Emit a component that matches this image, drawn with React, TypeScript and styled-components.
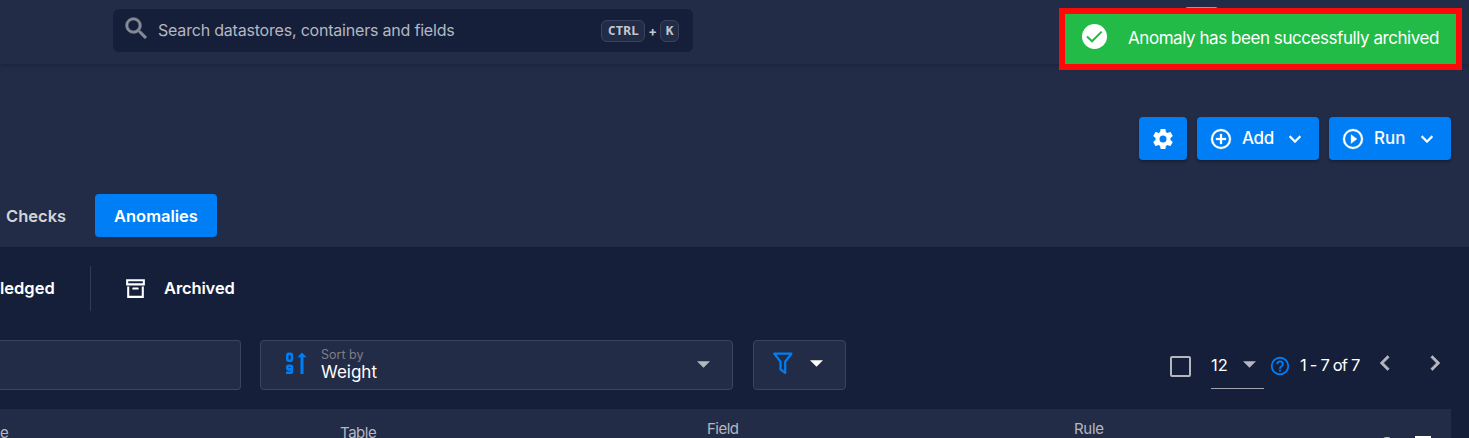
import React from "react";
import styled, { createGlobalStyle } from "styled-components";

const color = {
  panel: "#232c47",
  ground: "#161f3a",
  line: "#3c445d",
  blue: "#007ef5",
  green: "#22bb47",
  muted: "#b4b7c0",
  white: "#ffffff",
};

const GlobalStyle = createGlobalStyle`
  * { box-sizing: border-box; }
  html, body { margin: 0; background: ${color.ground}; overflow: hidden; }
  body { font-family: Inter, "Liberation Sans", sans-serif; color: ${color.white}; }
`;

const Page = styled.div`
  position: relative;
  display: flex;
  flex-direction: column;
  width: 1469px;
  height: 438px;
  overflow: hidden;
  background: ${color.ground};
`;

const Label = styled.span<{
  $size: number;
  $track?: number;
  $weight?: number;
  $color?: string;
  $line?: number;
}>`
  flex: none;
  font-size: ${(p) => p.$size}px;
  letter-spacing: ${(p) => p.$track ?? 0}px;
  font-weight: ${(p) => p.$weight ?? 400};
  color: ${(p) => p.$color ?? color.white};
  line-height: ${(p) => p.$line ?? 20}px;
  white-space: nowrap;
`;

const Glyph = styled.svg`
  display: block;
  flex: none;
  fill: currentColor;
`;

const TopBar = styled.header`
  flex: none;
  height: 64px;
  padding: 9px 0 0 113px;
  background: ${color.panel};
  box-shadow: 0 1px 5px rgba(10, 16, 32, 0.35);
  z-index: 1;
`;

const SearchBox = styled.div`
  display: flex;
  align-items: center;
  width: 580px;
  height: 43px;
  padding: 0 14px 0 9px;
  border-radius: 6px;
  background: ${color.ground};
  color: #868b98;
`;

const SearchText = styled.div`
  flex: 1;
  display: flex;
  padding: 0 0 1px 7px;
`;

const SearchIcon = styled.div`
  margin-top: -4px;
`;

const Shortcut = styled.div`
  display: flex;
  align-items: center;
  gap: 3px;
`;

const Key = styled.kbd<{ $width: number }>`
  display: flex;
  align-items: center;
  justify-content: center;
  width: ${(p) => p.$width}px;
  height: 22px;
  border: 1px solid ${color.line};
  border-radius: 6px;
  background: ${color.panel};
  color: #c3c5cc;
  font: bold 13px "DejaVu Sans Mono", monospace;
  letter-spacing: -0.1px;
`;

const Hero = styled.section`
  flex: none;
  display: flex;
  flex-direction: column;
  justify-content: space-between;
  height: 183px;
  padding: 53px 18px 10px 0;
  background: ${color.panel};
`;

const Actions = styled.div`
  display: flex;
  justify-content: flex-end;
  gap: 10px;
`;

const ActionButton = styled.button<{ $width: number }>`
  display: flex;
  align-items: center;
  width: ${(p) => p.$width}px;
  height: 43px;
  padding: 0 12px;
  border: 0;
  border-radius: 4px;
  background: ${color.blue};
  color: ${color.white};
  font-family: inherit;
  box-shadow: 0 2px 3px rgba(8, 14, 30, 0.4);
`;

const ActionText = styled.div`
  flex: 1;
  display: flex;
  padding: 0 0 1px 9px;
`;

const Tabs = styled.nav`
  display: flex;
  align-items: center;
`;

const Tab = styled.div<{ $active?: boolean; $width: number }>`
  display: flex;
  align-items: center;
  width: ${(p) => p.$width}px;
  height: 43px;
  padding-left: ${(p) => (p.$active ? 19 : 6)}px;
  border-radius: 4px;
  background: ${(p) => (p.$active ? color.blue : "transparent")};
`;

const StatusBar = styled.div`
  flex: none;
  display: flex;
  align-items: center;
  height: 93px;
  padding-bottom: 11px;
`;

const Status = styled.div<{ $first?: boolean }>`
  display: flex;
  align-items: center;
  height: 45px;
  width: ${(p) => (p.$first ? "91px" : "auto")};
  border-right: ${(p) => (p.$first ? `1px solid #323b54` : "0")};
  padding-left: ${(p) => (p.$first ? 0 : 32)}px;
  gap: 16px;
`;

const Filters = styled.div`
  flex: none;
  display: flex;
  height: 69px;
`;

const Field = styled.div<{ $width: number; $gap?: number; $open?: boolean }>`
  flex: none;
  display: flex;
  align-items: center;
  width: ${(p) => p.$width}px;
  height: 50px;
  margin-right: ${(p) => p.$gap ?? 0}px;
  border: 1px solid ${color.line};
  border-left-width: ${(p) => (p.$open ? 0 : 1)}px;
  border-radius: ${(p) => (p.$open ? "0 4px 4px 0" : "4px")};
  background: ${color.panel};
`;

const SortIcon = styled.div`
  margin: -4px 14px 0 24px;
  color: ${color.blue};
`;

const SortText = styled.div`
  flex: 1;
  display: flex;
  flex-direction: column;
  align-items: flex-start;
`;

const SortCaret = styled.div`
  margin: -2px 22px 0 0;
  color: ${color.muted};
`;

const FunnelIcon = styled.div`
  margin: -4px 17px 0 19px;
  color: ${color.blue};
`;

const FunnelCaret = styled.div`
  margin-top: -3px;
`;

const Pager = styled.div`
  display: flex;
  align-items: flex-start;
  margin-left: 324px;
`;

const CheckBox = styled.div`
  width: 21px;
  height: 21px;
  margin-top: 16px;
  border: 2px solid ${color.muted};
  border-radius: 2px;
`;

const PageSize = styled.div`
  display: flex;
  justify-content: space-between;
  width: 53px;
  height: 49px;
  margin-left: 20px;
  padding: 15px 8px 0 0;
  border-bottom: 1px solid #a1a5b0;
  color: ${color.muted};
`;

const CaretDrop = styled.div`
  padding-top: 6px;
`;

const Help = styled.div`
  margin: 15px 9px 0 5px;
  color: ${color.blue};
`;

const RangeText = styled.div`
  display: flex;
  width: 70px;
  padding-top: 15px;
`;

const Arrow = styled.div<{ $gap?: number }>`
  margin-right: ${(p) => p.$gap ?? 0}px;
  padding-top: 8px;
  color: ${color.muted};
`;

const TableHead = styled.div`
  flex: none;
  display: grid;
  grid-template-columns: 340px 367px 367px 309px 1fr;
  width: 1451px;
  height: 29px;
  overflow: hidden;
  background: ${color.panel};
`;

const HeadCell = styled.div<{ $top: number }>`
  display: flex;
  padding-top: ${(p) => p.$top}px;
`;

const HeadIcons = styled.div`
  display: flex;
  gap: 24px;
  padding-top: 27px;
`;

const CutDot = styled.div`
  width: 8px;
  height: 8px;
  margin-top: 1px;
  border-radius: 3px;
  background: ${color.muted};
`;

const CutBox = styled.div`
  width: 16px;
  height: 8px;
  background: ${color.white};
`;

const BadgeEdge = styled.div`
  position: absolute;
  top: 7px;
  left: 1185px;
  width: 33px;
  height: 6px;
  border-radius: 3px 3px 0 0;
  background: #d9952c;
  z-index: 2;
`;

const Toast = styled.div`
  position: absolute;
  top: 8px;
  left: 1059px;
  display: flex;
  align-items: center;
  width: 403px;
  height: 62px;
  padding: 0 0 2px 16px;
  border: 6px solid #fd0907;
  background: ${color.green};
  z-index: 3;
`;

const ToastIcon = styled.div`
  margin: -4px 20px 0 0;
`;

const Icon = ({
  size,
  d,
  bold = 0,
}: {
  size: number;
  d: string;
  bold?: number;
}) => (
  <Glyph width={size} height={size} viewBox="0 0 24 24">
    <path d={d} stroke="currentColor" strokeWidth={bold} />
  </Glyph>
);

const Caret = () => (
  <Glyph width="13" height="7" viewBox="0 0 13 7">
    <path d="M0 .3H13L6.5 6.7Z" />
  </Glyph>
);

const paths = {
  search:
    "M9.5,3A6.5,6.5 0 0,1 16,9.5C16,11.11 15.41,12.59 14.44,13.73L14.71,14H15.5L20.5,19L19,20.5L14,15.5V14.71L13.73,14.44C12.59,15.41 11.11,16 9.5,16A6.5,6.5 0 0,1 3,9.5A6.5,6.5 0 0,1 9.5,3M9.5,5C7,5 5,7 5,9.5C5,12 7,14 9.5,14C12,14 14,12 14,9.5C14,7 12,5 9.5,5Z",
  cog: "M12,15.5A3.5,3.5 0 0,1 8.5,12A3.5,3.5 0 0,1 12,8.5A3.5,3.5 0 0,1 15.5,12A3.5,3.5 0 0,1 12,15.5M19.43,12.97C19.47,12.65 19.5,12.33 19.5,12C19.5,11.67 19.47,11.34 19.43,11L21.54,9.37C21.73,9.22 21.78,8.95 21.66,8.73L19.66,5.27C19.54,5.05 19.27,4.96 19.05,5.05L16.56,6.05C16.04,5.66 15.5,5.32 14.87,5.07L14.5,2.42C14.46,2.18 14.25,2 14,2H10C9.75,2 9.54,2.18 9.5,2.42L9.13,5.07C8.5,5.32 7.96,5.66 7.44,6.05L4.95,5.05C4.73,4.96 4.46,5.05 4.34,5.27L2.34,8.73C2.21,8.95 2.27,9.22 2.46,9.37L4.57,11C4.53,11.34 4.5,11.67 4.5,12C4.5,12.33 4.53,12.65 4.57,12.97L2.46,14.63C2.27,14.78 2.21,15.05 2.34,15.27L4.34,18.73C4.46,18.95 4.73,19.03 4.95,18.95L7.44,17.94C7.96,18.34 8.5,18.68 9.13,18.93L9.5,21.58C9.54,21.82 9.75,22 10,22H14C14.25,22 14.46,21.82 14.5,21.58L14.87,18.93C15.5,18.67 16.04,18.34 16.56,17.94L19.05,18.95C19.27,19.03 19.54,18.95 19.66,18.73L21.66,15.27C21.78,15.05 21.73,14.78 21.54,14.63L19.43,12.97Z",
  add: "M12,20C7.59,20 4,16.41 4,12C4,7.59 7.59,4 12,4C16.41,4 20,7.59 20,12C20,16.41 16.41,20 12,20M12,2A10,10 0 0,0 2,12A10,10 0 0,0 12,22A10,10 0 0,0 22,12A10,10 0 0,0 12,2M13,7H11V11H7V13H11V17H13V13H17V11H13V7Z",
  play: "M12,20C7.59,20 4,16.41 4,12C4,7.59 7.59,4 12,4C16.41,4 20,7.59 20,12C20,16.41 16.41,20 12,20M12,2A10,10 0 0,0 2,12A10,10 0 0,0 12,22A10,10 0 0,0 22,12A10,10 0 0,0 12,2M10,16.5L16,12L10,7.5V16.5Z",
  down: "M7.41,8.58L12,13.17L16.59,8.58L18,10L12,16L6,10L7.41,8.58Z",
  left: "M15.41,16.58L10.83,12L15.41,7.41L14,6L8,12L14,18L15.41,16.58Z",
  right: "M8.59,16.58L13.17,12L8.59,7.41L10,6L16,12L10,18L8.59,16.58Z",
  archive:
    "M20 21H4V10H6V19H18V10H20V21M3 3H21V9H3V3M9.5 11H14.5C14.78 11 15 11.22 15 11.5V13H9V11.5C9 11.22 9.22 11 9.5 11M5 5V7H19V5H5Z",
  help: "M11,18H13V16H11V18M12,2A10,10 0 0,0 2,12A10,10 0 0,0 12,22A10,10 0 0,0 22,12A10,10 0 0,0 12,2M12,20C7.59,20 4,16.41 4,12C4,7.59 7.59,4 12,4C16.41,4 20,7.59 20,12C20,16.41 16.41,20 12,20M12,6A4,4 0 0,0 8,10H10A2,2 0 0,1 12,8A2,2 0 0,1 14,10C14,12 11,11.75 11,15H13C13,12.75 16,12.5 16,10A4,4 0 0,0 12,6Z",
};

export default function App() {
  return (
    <Page>
      <GlobalStyle />
      <TopBar>
        <SearchBox>
          <SearchIcon>
            <Icon size={29} d={paths.search} bold={0.5} />
          </SearchIcon>
          <SearchText>
            <Label $size={16} $track={-0.2} $color={color.muted}>
              Search datastores, containers and fields
            </Label>
          </SearchText>
          <Shortcut>
            <Key $width={44}>CTRL</Key>
            <Label $size={13} $line={18} $weight={700} $color="#c3c5cc">
              +
            </Label>
            <Key $width={19}>K</Key>
          </Shortcut>
        </SearchBox>
      </TopBar>

      <Hero>
        <Actions>
          <ActionButton $width={48}>
            <Icon size={24} d={paths.cog} />
          </ActionButton>
          <ActionButton $width={122}>
            <Icon size={24} d={paths.add} bold={0.3} />
            <ActionText>
              <Label $size={17} $weight={500} $track={-0.3}>
                Add
              </Label>
            </ActionText>
            <Icon size={24} d={paths.down} bold={0.3} />
          </ActionButton>
          <ActionButton $width={122}>
            <Icon size={24} d={paths.play} bold={0.3} />
            <ActionText>
              <Label $size={17} $weight={500}>
                Run
              </Label>
            </ActionText>
            <Icon size={24} d={paths.down} bold={0.3} />
          </ActionButton>
        </Actions>
        <Tabs>
          <Tab $width={95}>
            <Label $size={16.5} $weight={600} $color="#d3d5da">
              Checks
            </Label>
          </Tab>
          <Tab $width={122} $active>
            <Label $size={16.5} $weight={600}>
              Anomalies
            </Label>
          </Tab>
        </Tabs>
      </Hero>

      <StatusBar>
        <Status $first>
          <Label $size={16.5} $weight={600}>
            ledged
          </Label>
        </Status>
        <Status>
          <Icon size={25} d={paths.archive} />
          <Label $size={16.5} $weight={600} $track={-0.12}>
            Archived
          </Label>
        </Status>
      </StatusBar>

      <Filters>
        <Field $width={241} $gap={19} $open />
        <Field $width={473} $gap={20}>
          <SortIcon>
            <Glyph width="22" height="24" viewBox="0 0 22 24">
              <path
                fill="none"
                stroke="currentColor"
                strokeWidth="2.6"
                d="M3.8 2.8H5.2Q6.9 2.8 6.9 4.3V8.2Q6.9 9.7 5.2 9.7H4Q2.3 9.7 2.3 8.2V4.3Q2.3 2.8 3.8 2.8ZM6.9 18.4H3.8Q2.3 18.4 2.3 17V16.2Q2.3 14.8 3.8 14.8H5.4Q6.9 14.8 6.9 16.2V20.2Q6.9 21.7 5.4 21.7H1"
              />
              <path d="M17 1.6L21.6 6.2H18.5V23H15.5V6.2H12.4Z" />
            </Glyph>
          </SortIcon>
          <SortText>
            <Label $size={12.5} $line={14} $color="#7b7e86">
              Sort by
            </Label>
            <Label $size={17} $line={20}>
              Weight
            </Label>
          </SortText>
          <SortCaret>
            <Caret />
          </SortCaret>
        </Field>
        <Field $width={93}>
          <FunnelIcon>
            <Glyph width="20" height="23" viewBox="0 0 20 23">
              <path
                fill="none"
                stroke="currentColor"
                strokeWidth="2.2"
                strokeLinejoin="round"
                d="M1.3 1.7H18.4L12.2 9.6V21L7.5 17.3V9.6Z"
              />
            </Glyph>
          </FunnelIcon>
          <FunnelCaret>
            <Caret />
          </FunnelCaret>
        </Field>
        <Pager>
          <CheckBox />
          <PageSize>
            <Label $size={16.5}>12</Label>
            <CaretDrop>
              <Caret />
            </CaretDrop>
          </PageSize>
          <Help>
            <Icon size={22} d={paths.help} />
          </Help>
          <RangeText>
            <Label $size={16.5} $track={-0.8}>
              1 - 7 of 7
            </Label>
          </RangeText>
          <Arrow $gap={20}>
            <Icon size={30} d={paths.left} bold={0.4} />
          </Arrow>
          <Arrow>
            <Icon size={30} d={paths.right} bold={0.4} />
          </Arrow>
        </Pager>
      </Filters>

      <TableHead>
        <HeadCell $top={14}>
          <Label $size={15} $color={color.muted}>
            e
          </Label>
        </HeadCell>
        <HeadCell $top={14}>
          <Label $size={15} $track={-0.45} $color={color.muted}>
            Table
          </Label>
        </HeadCell>
        <HeadCell $top={10}>
          <Label $size={15} $track={-0.5} $color={color.muted}>
            Field
          </Label>
        </HeadCell>
        <HeadCell $top={10}>
          <Label $size={15} $track={-0.3} $color={color.muted}>
            Rule
          </Label>
        </HeadCell>
        <HeadIcons>
          <CutDot />
          <CutBox />
        </HeadIcons>
      </TableHead>

      <BadgeEdge />
      <Toast>
        <ToastIcon>
          <Glyph width="27" height="27" viewBox="0 0 27 27">
            <circle cx="13.5" cy="13.5" r="12.5" />
            <path
              fill="none"
              stroke={color.green}
              strokeWidth="2"
              d="M6 13.6L11 18.3L20.7 8.6"
            />
          </Glyph>
        </ToastIcon>
        <Label $size={17} $track={-0.44}>
          Anomaly has been successfully archived
        </Label>
      </Toast>
    </Page>
  );
}
